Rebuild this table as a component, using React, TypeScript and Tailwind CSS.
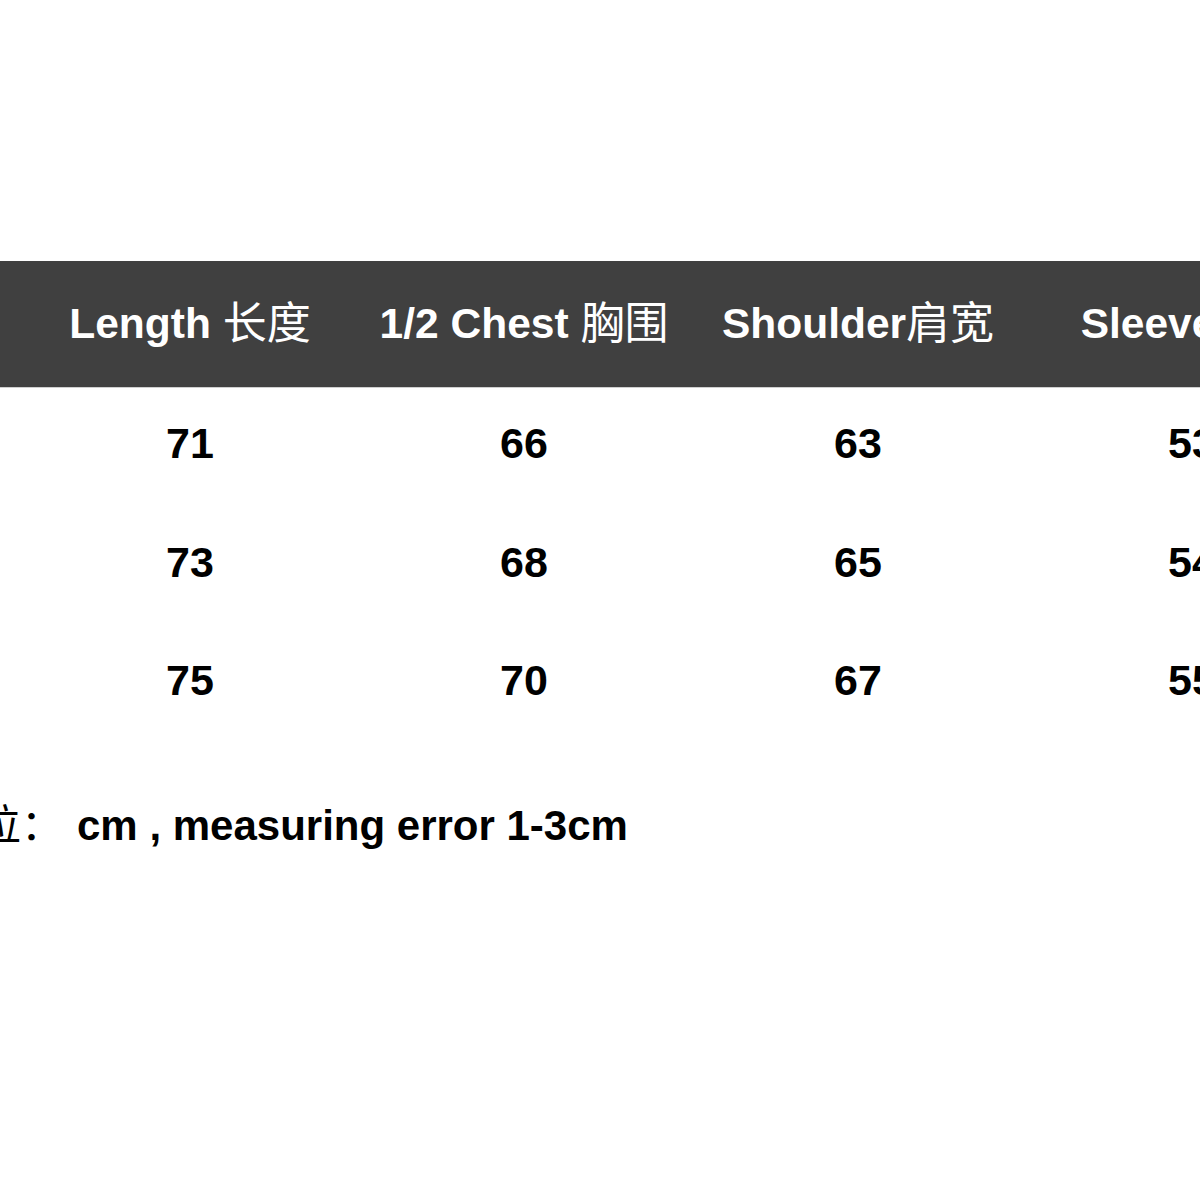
import React from "react";

const cols = [
  { en: "Size", cn: "尺码", vals: ["S", "M", "L"] },
  { en: "Length ", cn: "长度", vals: ["71", "73", "75"] },
  { en: "1/2 Chest ", cn: "胸围", vals: ["66", "68", "70"] },
  { en: "Shoulder", cn: "肩宽", vals: ["63", "65", "67"] },
  { en: "Sleeve", cn: "袖长", vals: ["53", "54", "55"] },
];

export default function App() {
  return (
    <div
      className="w-[1200px] h-[1200px] bg-white overflow-hidden"
      style={{ fontFamily: '"Liberation Sans", "Noto Sans CJK SC", sans-serif' }}
    >
      <div className="h-[261px]" />
      <div className="h-[126px] bg-[#404040] flex ml-[-311px]">
        {cols.map((c, i) => (
          <div
            key={i}
            className="w-[334px] shrink-0 flex items-center justify-center text-white text-[42.5px] font-bold leading-none whitespace-pre"
          >
            <span>{c.en}</span>
            <span className="font-normal text-[44px]">{c.cn}</span>
          </div>
        ))}
      </div>
      <div className="h-px bg-[#cfcfcf]" />
      {[0, 1, 2].map((r) => (
        <div key={r} className="h-[118.5px] flex ml-[-311px] pb-[7px]">
          {cols.map((c, i) => (
            <div
              key={i}
              className="w-[334px] shrink-0 flex items-center justify-center text-black text-[43px] font-bold leading-none"
            >
              {c.vals[r]}
            </div>
          ))}
        </div>
      ))}
      <div className="mt-[61px] ml-[-63px] text-black text-[42px] font-bold leading-none whitespace-pre">
        <span className="font-normal">单位：</span>
        <span className="ml-[14px]">cm , measuring error 1-3cm</span>
      </div>
    </div>
  );
}
